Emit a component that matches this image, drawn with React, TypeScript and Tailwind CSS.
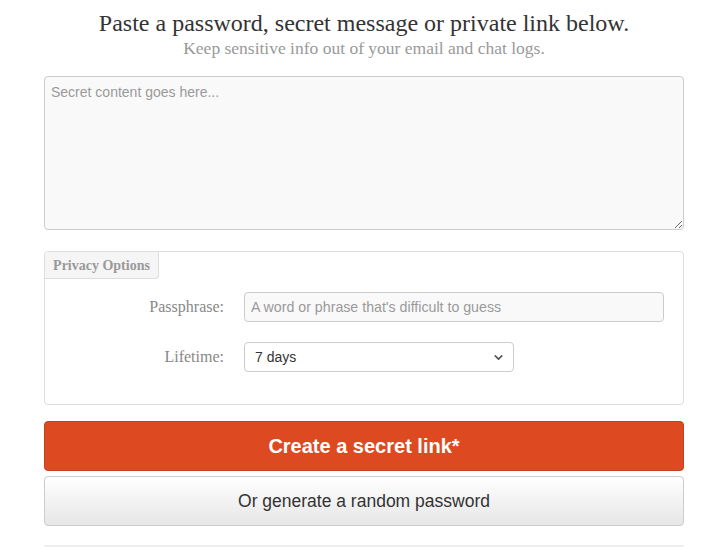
import { ChevronDown } from "lucide-react";

const serif = { fontFamily: '"Liberation Serif", "DejaVu Serif", serif' };

export default function App() {
  return (
    <div className="min-h-screen bg-white" style={{ fontFamily: '"Liberation Sans", Arial, sans-serif' }}>
      <div className="w-[640px] ml-[44px] pt-[8px]">
        <div className="text-center" style={serif}>
          <h1 className="text-[24px] leading-[30px] text-[#333]">Paste a password, secret message or private link below.</h1>
          <p className="mt-[1px] text-[17.5px] leading-[19px] text-[#999]">Keep sensitive info out of your email and chat logs.</p>
        </div>

        <textarea
          placeholder="Secret content goes here..."
          className="mt-[18px] block w-full h-[154px] rounded-[4px] border border-[#cccccc] bg-[#f9f9f9] px-[6px] py-[5px] text-[14px] leading-[20px] text-[#555] placeholder:text-[#999] outline-none"
        />

        <fieldset className="mt-[21px] h-[154px] rounded-[4px] border border-[#dddddd] bg-white">
          <div
            className="w-[114px] h-[27px] bg-[#f5f5f5] border-r border-b border-[#dddddd] rounded-br-[4px] rounded-tl-[4px] flex items-center justify-center text-[14px] font-bold text-[#999]"
            style={serif}
          >
            Privacy Options
          </div>

          <div className="mt-[13px] flex items-center">
            <label className="w-[179px] text-right text-[16px] text-[#888]" style={serif}>Passphrase:</label>
            <input
              placeholder="A word or phrase that's difficult to guess"
              className="ml-[20px] w-[420px] h-[30px] rounded-[4px] border border-[#cccccc] bg-[#f9f9f9] px-[6px] text-[14.2px] text-[#555] placeholder:text-[#999] outline-none"
            />
          </div>

          <div className="mt-[20px] flex items-center">
            <label className="w-[179px] text-right text-[16px] text-[#888]" style={serif}>Lifetime:</label>
            <div className="ml-[20px] w-[270px] h-[30px] rounded-[4px] border border-[#cccccc] bg-white flex items-center justify-between pl-[10px] pr-[8px] text-[14px] text-[#333]">
              <span>7 days</span>
              <ChevronDown size={13} strokeWidth={3} className="text-[#555]" />
            </div>
          </div>
        </fieldset>

        <button className="mt-[16px] w-full h-[50px] rounded-[4px] bg-[#dd4a22] border border-[#c7401c] text-white text-[20px] font-bold">
          Create a secret link*
        </button>
        <button className="mt-[5px] w-full h-[50px] rounded-[4px] border border-[#cccccc] bg-gradient-to-b from-white to-[#e6e6e6] text-[#333] text-[17.5px]">
          Or generate a random password
        </button>

        <div className="mt-[19px] h-[2px] bg-[#eeeeee]" />
      </div>
    </div>
  );
}
